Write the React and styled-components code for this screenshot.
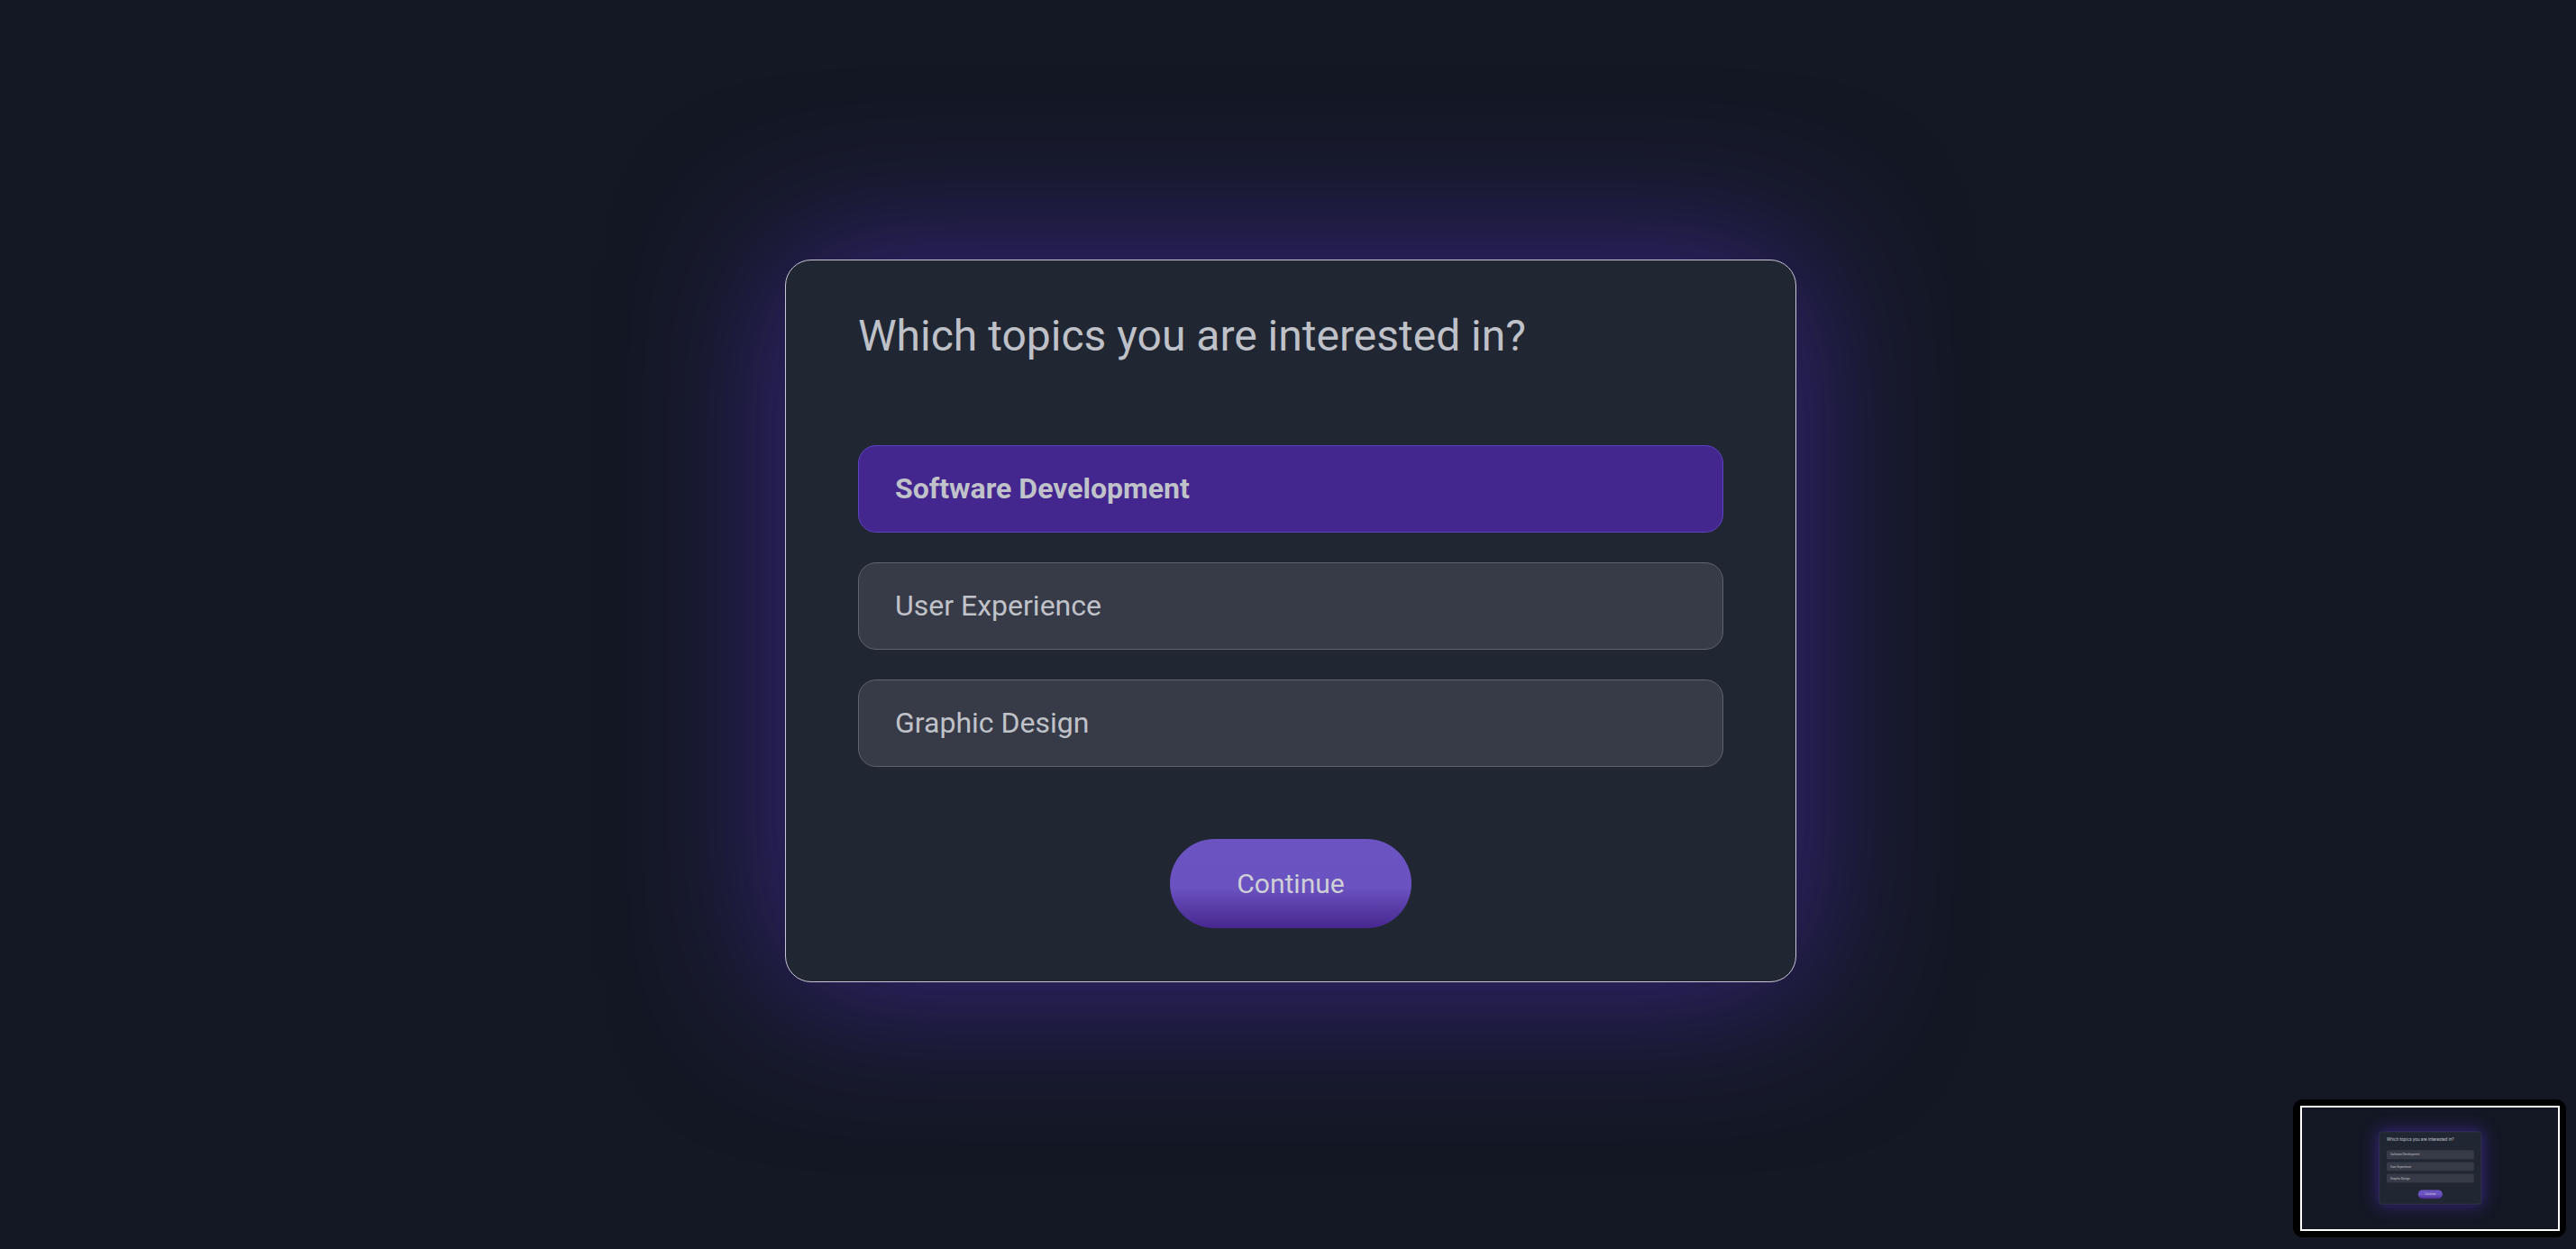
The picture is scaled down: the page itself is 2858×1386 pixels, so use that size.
import React, { useState } from "react";
import styled, { createGlobalStyle } from "styled-components";

const GlobalStyle = createGlobalStyle`
  html, body {
    margin: 0;
    padding: 0;
    background: #141824;
  }
  * {
    box-sizing: border-box;
  }
`;

const topics = ["Software Development", "User Experience", "Graphic Design"];

// ---------- Page ----------
const Page = styled.div`
  width: 2858px;
  height: 1386px;
  display: flex;
  align-items: center;
  justify-content: center;
  padding: 0 0 9px 6px;
  background: #141824;
  font-family: Roboto, "Noto Sans", Arial, sans-serif;
  overflow: hidden;
`;

const Card = styled.div`
  width: 1122px;
  display: flex;
  flex-direction: column;
  padding: 55px 80px 59px;
  background: #212633;
  border: 1px solid #c9c6d9;
  border-radius: 29px;
  box-shadow: 0 0 170px 12px rgba(84, 50, 206, 0.52);
`;

const Title = styled.h1`
  margin: 0 0 93px;
  font-size: 48px;
  font-weight: 400;
  line-height: normal;
  color: #bfc1c8;
`;

const OptionList = styled.div`
  display: flex;
  flex-direction: column;
  gap: 33px;
`;

const Option = styled.button`
  height: 97px;
  display: flex;
  align-items: center;
  padding: 0 40px;
  border-radius: 20px;
  border: 1px solid ${({ $active }) => ($active ? "#5c43c2" : "#5f6371")};
  background: ${({ $active }) => ($active ? "#44278e" : "#373a47")};
  color: #c0c2c9;
  font-family: inherit;
  font-size: 32px;
  font-weight: ${({ $active }) => ($active ? 700 : 400)};
  text-align: left;
  cursor: pointer;
`;

const ContinueButton = styled.button`
  align-self: center;
  width: 268px;
  height: 99px;
  margin-top: 80px;
  border: none;
  border-radius: 50px;
  background: linear-gradient(180deg, #6b53c1 0%, #6a52c0 55%, #46278e 100%);
  color: #cfd0d6;
  font-family: inherit;
  font-size: 30px;
  font-weight: 400;
  cursor: pointer;
`;

// ---------- Minimap ----------
const Minimap = styled.div`
  position: fixed;
  left: 2544px;
  top: 1220px;
  width: 303px;
  height: 153px;
  padding: 7px 7px 6px 8px;
  background: #000;
  border-radius: 11px;
`;

const MinimapFrame = styled.div`
  width: 288px;
  height: 139px;
  border: 2px solid #fff;
  overflow: hidden;
  position: relative;
`;

const MinimapScale = styled.div`
  position: absolute;
  left: -2px;
  top: -2px;
  transform: scale(0.1008, 0.1003);
  transform-origin: 0 0;
`;

const Survey = ({ selected, onSelect }) => (
  <Page>
    <Card>
      <Title>Which topics you are interested in?</Title>
      <OptionList>
        {topics.map((t) => (
          <Option key={t} $active={selected === t} onClick={() => onSelect(t)}>
            {t}
          </Option>
        ))}
      </OptionList>
      <ContinueButton>Continue</ContinueButton>
    </Card>
  </Page>
);

export default function App() {
  const [selected, setSelected] = useState("Software Development");

  return (
    <>
      <GlobalStyle />
      <Survey selected={selected} onSelect={setSelected} />
      <Minimap>
        <MinimapFrame>
          <MinimapScale>
            <Survey selected={null} onSelect={() => {}} />
          </MinimapScale>
        </MinimapFrame>
      </Minimap>
    </>
  );
}
